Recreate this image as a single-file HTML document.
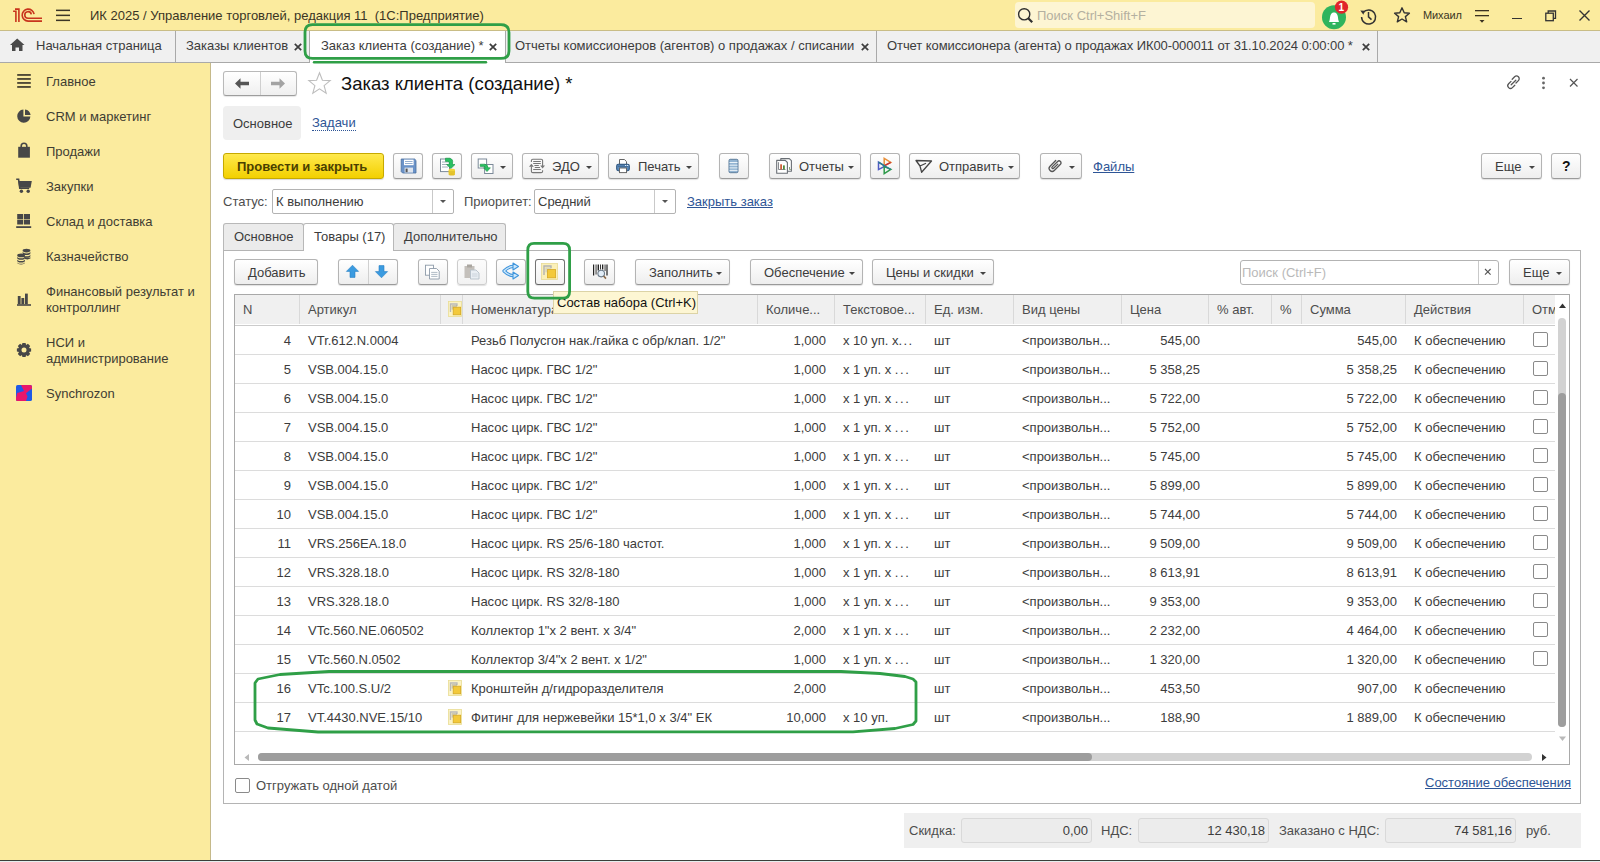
<!DOCTYPE html>
<html><head><meta charset="utf-8">
<style>
*{box-sizing:border-box;margin:0;padding:0}
html,body{width:1600px;height:862px;overflow:hidden;background:#fff;font-family:"Liberation Sans",sans-serif;font-size:13px;color:#3c3c3c}
.a{position:absolute}
.t{position:absolute;white-space:nowrap;line-height:15px;font-size:13px}
#top{left:0;top:0;width:1600px;height:31px;background:#fbeb9e;border-bottom:1px solid #c9bd86}
#tabs{left:0;top:31px;width:1600px;height:32px;background:#f0f0f0;border-bottom:1px solid #a9a9a9}
.tsep{position:absolute;top:31px;width:1px;height:31px;background:#a9a9a9}
#side{left:0;top:63px;width:211px;height:797px;background:#fbeb9e;border-right:1px solid #c5b98a}
#bot{left:0;top:860px;width:1600px;height:1px;background:#3b3f3a}
#bot2{left:0;top:861px;width:1600px;height:1px;background:#e6eeee}
.side .t{color:#3f3d33}
.btn{position:absolute;height:26px;border:1px solid #b4b4b4;border-bottom-color:#9a9a9a;border-radius:3px;background:linear-gradient(#ffffff,#eeeeee);box-shadow:0 1px 1px rgba(0,0,0,.12)}
.dd{position:absolute;width:0;height:0;border-left:3px solid transparent;border-right:3px solid transparent;border-top:3px solid #444}
.lnk{color:#2e5596;text-decoration:underline}
.hd{position:absolute;top:295px;height:29px;background:#f0f0f0;border-right:1px solid #d9d9d9}
.rs{position:absolute;left:235px;width:1320px;height:1px;background:#dcdcdc}
.num{text-align:right}
.cb{position:absolute;width:15px;height:15px;border:1px solid #8a8a8a;border-radius:2px;background:#fff}
</style></head><body>
<!-- TOP BAR -->
<div id="top" class="a"></div>
<div id="tabs" class="a"></div>
<div id="side" class="a side"></div>

<!-- top bar content -->
<svg class="a" style="left:0;top:0" width="50" height="30" viewBox="0 0 50 30">
<g fill="none" stroke="#c8341d" stroke-width="1.6" stroke-linecap="butt">
<polyline points="13.1,11.3 15.9,11.3 15.9,21.9"/>
<polyline points="15,9.1 18.9,9.1 18.9,21.9"/>
<path d="M34.1,14.1 A6,6 0 1 0 28.1,21.1 L42,21.1"/>
<path d="M31.3,14.3 A3.3,3.3 0 1 0 28.1,18.3 L42,18.3"/>
</g></svg>
<svg class="a" style="left:55px;top:8px" width="16" height="14"><g fill="#3b3526"><rect x="1" y="1.6" width="14" height="1.5"/><rect x="1" y="6.6" width="14" height="1.5"/><rect x="1" y="11.6" width="14" height="1.5"/></g></svg>
<div class="t" style="left:90px;top:8px;color:#3a3524">ИК 2025 / Управление торговлей, редакция 11&nbsp; (1С:Предприятие)</div>
<div class="a" style="left:1015px;top:2px;width:300px;height:26px;background:#fdf5d3;border-radius:4px"></div>
<svg class="a" style="left:1017px;top:7px" width="18" height="18"><circle cx="7.2" cy="7.3" r="5.6" fill="none" stroke="#2f2f2f" stroke-width="1.4"/><line x1="11.2" y1="11.3" x2="15.2" y2="15.3" stroke="#2f2f2f" stroke-width="2.2"/></svg>
<div class="t" style="left:1037px;top:8px;color:#b4b0a0">Поиск Ctrl+Shift+F</div>
<svg class="a" style="left:1318px;top:0" width="36" height="30"><circle cx="16" cy="17.3" r="12" fill="#2fb45d"/><path d="M11,22 L11.5,20.5 C12,19 11.8,16 13,14.2 C14,12.8 15,12.5 16,12.5 C17,12.5 18,12.8 19,14.2 C20.2,16 20,19 20.5,20.5 L21,22 Z" fill="#fff"/><rect x="14.5" y="23" width="3" height="1.6" fill="#fff"/><circle cx="23.5" cy="7.2" r="6.6" fill="#e0252b"/><text x="23.4" y="11" font-family="Liberation Sans" font-size="10" font-weight="bold" fill="#fff" text-anchor="middle">1</text></svg>
<svg class="a" style="left:1358px;top:6px" width="20" height="20"><path d="M5.2,6.6 A7,7 0 1 1 3.6,11" fill="none" stroke="#333" stroke-width="1.5"/><path d="M2.3,4.4 L6.8,4.8 L5.4,8.8 Z" fill="#333"/><path d="M10.5,6 L10.5,10.8 L13.5,13.6" fill="none" stroke="#333" stroke-width="1.5"/></svg>
<svg class="a" style="left:1393px;top:6px" width="18" height="18"><path d="M9,1.8 L11.2,6.8 L16.4,7.2 L12.4,10.6 L13.7,15.8 L9,13 L4.3,15.8 L5.6,10.6 L1.6,7.2 L6.8,6.8 Z" fill="none" stroke="#333" stroke-width="1.4" stroke-linejoin="round"/></svg>
<div class="t" style="left:1423px;top:8px;font-size:11px;color:#3a3524;letter-spacing:-0.1px">Михаил</div>
<svg class="a" style="left:1474px;top:8px" width="16" height="16"><rect x="1" y="2" width="14" height="1.3" fill="#3a3020"/><rect x="1" y="7" width="14" height="1.3" fill="#3a3020"/><path d="M5.5,12 L10.5,12 L8,14.8 Z" fill="#3a3020"/></svg>
<div class="a" style="left:1512px;top:18px;width:10px;height:1.3px;background:#333"></div>
<svg class="a" style="left:1544px;top:9px" width="14" height="14"><rect x="1.8" y="4.2" width="7.5" height="7.5" fill="none" stroke="#333" stroke-width="1.3"/><path d="M4.2,4.2 V2 H11.5 V9.3 H9.3" fill="none" stroke="#333" stroke-width="1.3"/></svg>
<svg class="a" style="left:1578px;top:9px" width="14" height="14"><path d="M1.5,1.5 L11.5,11.5 M11.5,1.5 L1.5,11.5" stroke="#333" stroke-width="1.4"/></svg>
<!-- tabs -->
<svg class="a" style="left:10px;top:38px" width="16" height="14"><path d="M7.2,0.5 L14.5,7 L12.5,7 L12.5,13 L9,13 L9,9.5 L5.5,9.5 L5.5,13 L2,13 L2,7 L0,7 Z" fill="#4a4a4a"/></svg>
<div class="t" style="left:36px;top:38px;color:#3c3c3c">Начальная страница</div>
<div class="tsep" style="left:175px"></div>
<div class="t" style="left:186px;top:38px;color:#3c3c3c">Заказы клиентов</div>
<svg class="a" style="left:294px;top:43px" width="8" height="8"><path d="M0.8,0.8 L7.2,7.2 M7.2,0.8 L0.8,7.2" stroke="#3d3d3d" stroke-width="1.7"/></svg>
<div class="tsep" style="left:309px"></div>
<div class="a" style="left:310px;top:31px;width:195px;height:32px;background:#fff"></div>
<div class="t" style="left:321px;top:38px;color:#3c3c3c">Заказ клиента (создание) *</div>
<svg class="a" style="left:489px;top:43px" width="8" height="8"><path d="M0.8,0.8 L7.2,7.2 M7.2,0.8 L0.8,7.2" stroke="#3d3d3d" stroke-width="1.7"/></svg>
<div class="tsep" style="left:505px"></div>
<div class="t" style="left:515px;top:38px;color:#3c3c3c">Отчеты комиссионеров (агентов) о продажах / списании</div>
<svg class="a" style="left:861px;top:43px" width="8" height="8"><path d="M0.8,0.8 L7.2,7.2 M7.2,0.8 L0.8,7.2" stroke="#3d3d3d" stroke-width="1.7"/></svg>
<div class="tsep" style="left:876px"></div>
<div class="t" style="left:887px;top:38px;color:#3c3c3c;letter-spacing:-0.08px">Отчет комиссионера (агента) о продажах ИК00-000011 от 31.10.2024 0:00:00 *</div>
<svg class="a" style="left:1362px;top:43px" width="8" height="8"><path d="M0.8,0.8 L7.2,7.2 M7.2,0.8 L0.8,7.2" stroke="#3d3d3d" stroke-width="1.7"/></svg>
<div class="tsep" style="left:1377px"></div>

<!-- sidebar -->
<svg class="a" style="left:16px;top:73px" width="16" height="16"><g fill="#3f3a2c"><rect x="1.2" y="1.1" width="13.6" height="1.7"/><rect x="1.2" y="5.1" width="13.6" height="1.7"/><rect x="1.2" y="9.1" width="13.6" height="1.7"/><rect x="1.2" y="13.1" width="13.6" height="1.7"/></g></svg>
<div class="t" style="left:46px;top:74px;color:#3f3d33">Главное</div>
<svg class="a" style="left:16px;top:108px" width="16" height="16"><path d="M7.4,1.6 A6.6,6.6 0 1 0 14.4,8.6 L7.4,8.6 Z" fill="#474747"/><path d="M9,1.4 A6.6,6.6 0 0 1 14.6,7 L9,7 Z" fill="#474747"/></svg>
<div class="t" style="left:46px;top:109px;color:#3f3d33">CRM и маркетинг</div>
<svg class="a" style="left:16px;top:141px" width="16" height="18"><path d="M20.5,0" /><path d="M2.2,5.8 H13.9 V16.7 H2.2 Z" fill="#474747"/><path d="M5.2,7.5 V5 A2.8,2.8 0 0 1 10.8,5 V7.5" fill="none" stroke="#474747" stroke-width="1.6"/></svg>
<div class="t" style="left:46px;top:144px;color:#3f3d33">Продажи</div>
<svg class="a" style="left:15px;top:177px" width="18" height="16"><path d="M1.2,2.3 H3.6 L4.8,11.2 H14.2" fill="none" stroke="#474747" stroke-width="1.6"/><path d="M3.3,3.9 H16.8 L15.6,10.7 H4.2 Z" fill="#474747"/><circle cx="6.4" cy="14.3" r="1.7" fill="#474747"/><circle cx="13.2" cy="14.3" r="1.7" fill="#474747"/></svg>
<div class="t" style="left:46px;top:179px;color:#3f3d33">Закупки</div>
<svg class="a" style="left:16px;top:213px" width="16" height="16"><g fill="#474747"><rect x="1.2" y="1" width="6" height="5"/><rect x="8" y="1" width="6" height="5"/><rect x="1.2" y="6.6" width="6" height="4.9"/><rect x="8" y="6.6" width="6" height="4.9"/><rect x="0.2" y="13.2" width="15" height="1.8"/></g></svg>
<div class="t" style="left:46px;top:214px;color:#3f3d33">Склад и доставка</div>
<svg class="a" style="left:16px;top:247px" width="16" height="18"><g fill="#474747"><ellipse cx="10.5" cy="3.6" rx="3.9" ry="1.8"/><path d="M6.6,4.6 A3.9,1.8 0 0 0 14.4,4.6 V6.2 A3.9,1.8 0 0 1 6.6,6.2 Z"/><path d="M6.6,7.4 A3.9,1.8 0 0 0 14.4,7.4 V9 A3.9,1.8 0 0 1 6.6,9 Z"/><path d="M9,10.2 A3.9,1.8 0 0 0 14.4,10.2 V11.6 A3.9,1.8 0 0 1 9,12 Z"/><ellipse cx="5.1" cy="8.4" rx="3.9" ry="1.8"/><path d="M1.2,9.4 A3.9,1.8 0 0 0 9,9.4 V11 A3.9,1.8 0 0 1 1.2,11 Z"/><path d="M1.2,12.2 A3.9,1.8 0 0 0 9,12.2 V13.8 A3.9,1.8 0 0 1 1.2,13.8 Z"/><path d="M1.2,15 A3.9,1.8 0 0 0 9,15 V15.6 A3.9,1.8 0 0 1 1.2,15.6 Z"/></g></svg>
<div class="t" style="left:46px;top:249px;color:#3f3d33">Казначейство</div>
<svg class="a" style="left:16px;top:292px" width="16" height="15"><g fill="#474747"><rect x="1.8" y="4" width="2.8" height="8.2"/><rect x="5.4" y="6" width="2.8" height="6.2"/><rect x="9" y="1.6" width="2.8" height="10.6"/><rect x="1" y="12.2" width="14" height="1.6"/></g></svg>
<div class="t" style="left:46px;top:284px;color:#3f3d33">Финансовый результат и</div>
<div class="t" style="left:46px;top:300px;color:#3f3d33">контроллинг</div>
<svg class="a" style="left:16px;top:342px" width="16" height="16"><path fill="#474747" fill-rule="evenodd" d="M12.97,5.90 L15.12,6.41 L15.12,9.59 L12.97,10.10 L13.00,10.03 L14.16,11.91 L11.91,14.16 L10.03,13.00 L10.10,12.97 L9.59,15.12 L6.41,15.12 L5.90,12.97 L5.97,13.00 L4.09,14.16 L1.84,11.91 L3.00,10.03 L3.03,10.10 L0.88,9.59 L0.88,6.41 L3.03,5.90 L3.00,5.97 L1.84,4.09 L4.09,1.84 L5.97,3.00 L5.90,3.03 L6.41,0.88 L9.59,0.88 L10.10,3.03 L10.03,3.00 L11.91,1.84 L14.16,4.09 L13.00,5.97 Z M10.5,8 A2.5,2.5 0 1 0 5.5,8 A2.5,2.5 0 1 0 10.5,8 Z"/></svg>
<div class="t" style="left:46px;top:335px;color:#3f3d33">НСИ и</div>
<div class="t" style="left:46px;top:351px;color:#3f3d33">администрирование</div>
<svg class="a" style="left:16px;top:385px" width="16" height="16"><defs><clipPath id="sq"><rect x="0" y="0" width="16" height="16" rx="1.6"/></clipPath></defs><g clip-path="url(#sq)"><rect x="0" y="0" width="16" height="16" fill="#1f5ae6"/><path d="M5,0 L16,0 L16,3.6 L10,8.2 L11.5,11.5 L10,16 L0,16 L0,13 L1.2,8 L8,6 Z" fill="#e8176a"/></g></svg>
<div class="t" style="left:46px;top:386px;color:#3f3d33">Synchrozon</div>

<!-- form header -->
<div class="a" style="left:223px;top:71px;width:74px;height:25px;border:1px solid #b9b9b9;border-bottom-color:#9d9d9d;border-radius:3px;background:linear-gradient(#fff,#efefef);box-shadow:0 1px 1px rgba(0,0,0,.1)"></div>
<div class="a" style="left:260px;top:72px;width:1px;height:23px;background:#cfcfcf"></div>
<svg class="a" style="left:234px;top:77px" width="16" height="13"><path d="M1,6.5 L6.5,1.2 L6.5,4.8 L15,4.8 L15,8.2 L6.5,8.2 L6.5,11.8 Z" fill="#555"/></svg>
<svg class="a" style="left:270px;top:77px" width="16" height="13"><path d="M15,6.5 L9.5,1.2 L9.5,4.8 L1,4.8 L1,8.2 L9.5,8.2 L9.5,11.8 Z" fill="#a3a3a3"/></svg>
<svg class="a" style="left:307px;top:71px" width="25" height="24"><path d="M12.5,1.8 L15.4,9.2 L23.2,9.6 L17.1,14.6 L19.2,22.2 L12.5,17.9 L5.8,22.2 L7.9,14.6 L1.8,9.6 L9.6,9.2 Z" fill="none" stroke="#bdbdbd" stroke-width="1.1" stroke-linejoin="miter"/></svg>
<div class="t" style="left:341px;top:73px;font-size:18.5px;line-height:21px;color:#111">Заказ клиента (создание) *</div>
<svg class="a" style="left:1505px;top:74px" width="17" height="17"><g fill="none" stroke="#555" stroke-width="1.3" stroke-linecap="round"><path d="M7.2,5.2 L9.6,2.8 A2.6,2.6 0 0 1 13.4,6.6 L11,9"/><path d="M9.8,11.2 L7.4,13.6 A2.6,2.6 0 0 1 3.6,9.8 L6,7.4"/><path d="M6.2,10.8 L10.8,6.2"/></g></svg>
<svg class="a" style="left:1540px;top:76px" width="8" height="14"><g fill="#666"><circle cx="3.5" cy="2.2" r="1.4"/><circle cx="3.5" cy="7" r="1.4"/><circle cx="3.5" cy="11.8" r="1.4"/></g></svg>
<svg class="a" style="left:1569px;top:78px" width="10" height="10"><path d="M1,1 L8.5,8.5 M8.5,1 L1,8.5" stroke="#555" stroke-width="1.2"/></svg>
<div class="a" style="left:223px;top:106px;width:78px;height:34px;background:#efefef;border-radius:4px"></div>
<div class="t" style="left:233px;top:116px;color:#3c3c3c">Основное</div>
<div class="t" style="left:312px;top:116px;color:#2e5596;border-bottom:1px dotted #2e5596;line-height:14px">Задачи</div>
<!-- command bar -->
<div class="a" style="left:223px;top:153px;width:161px;height:26px;border:1px solid #c6a900;border-radius:3px;background:linear-gradient(#ffe94d,#f3d000);box-shadow:0 1px 1px rgba(0,0,0,.15)"></div>
<div class="t" style="left:237px;top:159px;font-weight:bold;color:#4a4000">Провести и закрыть</div>
<div class="btn" style="left:393px;top:153px;width:30px"></div>
<div class="btn" style="left:432px;top:153px;width:30px"></div>
<div class="btn" style="left:471px;top:153px;width:42px"></div>
<div class="btn" style="left:522px;top:153px;width:77px"></div>
<div class="btn" style="left:608px;top:153px;width:91px"></div>
<div class="btn" style="left:719px;top:153px;width:30px"></div>
<div class="btn" style="left:769px;top:153px;width:92px"></div>
<div class="btn" style="left:870px;top:153px;width:30px"></div>
<div class="btn" style="left:909px;top:153px;width:111px"></div>
<div class="btn" style="left:1040px;top:153px;width:42px"></div>
<div class="btn" style="left:1481px;top:153px;width:61px"></div>
<div class="btn" style="left:1551px;top:153px;width:30px"></div>
<!-- icons command bar -->
<svg class="a" style="left:400px;top:158px" width="17" height="16"><path d="M1.2,1 H14.6 L16,2.4 V15 H2.6 L1.2,13.6 Z" fill="#6b93c9" stroke="#4a6f9f" stroke-width="0.8"/><rect x="4" y="1.6" width="9.6" height="5.6" fill="#fff"/><rect x="5" y="3" width="7.6" height="0.9" fill="#8aa6cc"/><rect x="5" y="5" width="7.6" height="0.9" fill="#8aa6cc"/><rect x="4.6" y="9.6" width="8.4" height="5" fill="#dde4ee"/><rect x="5.6" y="10.6" width="2" height="3.6" fill="#555"/></svg>
<svg class="a" style="left:439px;top:157px" width="18" height="19"><rect x="1.5" y="2" width="9" height="12.6" fill="#fff" stroke="#7c8a99" stroke-width="1"/><g stroke="#9aa7b4" stroke-width="0.9"><line x1="3" y1="5" x2="9" y2="5"/><line x1="3" y1="7.5" x2="9" y2="7.5"/><line x1="3" y1="10" x2="9" y2="10"/></g><path d="M6.5,1.2 H11 A4,4 0 0 1 13.5,6 V7.5 H16 L11.8,11.6 L7.6,7.5 H10.2 V6 A1.5,1.5 0 0 0 8.7,4.4 H6.5 Z" fill="#28c062" stroke="#119040" stroke-width="0.6"/><ellipse cx="12.8" cy="13" rx="3.2" ry="1.3" fill="#f2d53b"/><rect x="9.6" y="13" width="6.4" height="4.2" fill="#f2d53b"/><ellipse cx="12.8" cy="17.2" rx="3.2" ry="1.3" fill="#e3c02a"/><line x1="9.6" y1="15" x2="16" y2="15" stroke="#c9a81c" stroke-width="0.7"/></svg>
<svg class="a" style="left:477px;top:158px" width="18" height="17"><rect x="1.2" y="1" width="8.4" height="9" fill="#fff" stroke="#7c8a99"/><rect x="7.6" y="6.5" width="8.4" height="9" fill="#fff" stroke="#7c8a99"/><path d="M3.2,6.2 H7.5 A3.6,3.6 0 0 1 11,9.8 H13.4 L10,13.6 L6.6,9.8 H8.6 A1.6,1.6 0 0 0 7,8.4 H3.2 Z" fill="#2cc162" stroke="#129142" stroke-width="0.6"/></svg>
<div class="dd" style="left:500px;top:166px"></div>
<svg class="a" style="left:524px;top:153px" width="28" height="26"><g fill="none" stroke="#777" stroke-width="1.1"><path d="M7.4,9 V7.6 A1.4,1.4 0 0 1 8.8,6.2 H17.2 A1.4,1.4 0 0 1 18.6,7.6 V13"/><path d="M18.6,17.2 V18.2 A1.4,1.4 0 0 1 17.2,19.6 H8.8 A1.4,1.4 0 0 1 7.4,18.2 V13.5"/><path d="M9.2,8.5 H16.8 M9.2,10.5 H16.8 M10.4,12.5 H14.8 M10.8,14.5 H16 M9.2,16.5 H16.8"/></g><path d="M5,13.8 L9.8,13.8 L7.4,10.8 Z M16.2,12.4 L21,12.4 L18.6,15.4 Z" fill="#777"/></svg>
<div class="t" style="left:552px;top:159px;color:#3c3c3c">ЭДО</div>
<div class="dd" style="left:586px;top:166px"></div>
<svg class="a" style="left:610px;top:153px" width="28" height="26"><path d="M9.5,6.5 H14.4 L16.5,8.6 V11.5 H9.5 Z" fill="#fff" stroke="#666" stroke-width="1"/><rect x="6.7" y="11.3" width="12.6" height="6.4" rx="1.6" fill="#5d8cbd" stroke="#2e5680" stroke-width="1.1"/><line x1="8" y1="13.2" x2="18" y2="13.2" stroke="#2e5680" stroke-width="0.8"/><rect x="15" y="12" width="1.2" height="1" fill="#dff0ff"/><rect x="17" y="12" width="1.2" height="1" fill="#dff0ff"/><rect x="9.5" y="15" width="7" height="4.6" fill="#fff" stroke="#666" stroke-width="1"/></svg>
<div class="t" style="left:638px;top:159px;color:#3c3c3c">Печать</div>
<div class="dd" style="left:686px;top:166px"></div>
<svg class="a" style="left:727px;top:158px" width="13" height="16"><rect x="2" y="1.3" width="9" height="13.4" rx="1.2" fill="#93b4d2" stroke="#5f7f9d" stroke-width="1"/><g stroke="#eaf2f8" stroke-width="1"><line x1="2.5" y1="4.5" x2="10.5" y2="4.5"/><line x1="2.5" y1="7.2" x2="10.5" y2="7.2"/><line x1="2.5" y1="9.9" x2="10.5" y2="9.9"/><line x1="2.5" y1="12.4" x2="10.5" y2="12.4"/></g></svg>
<svg class="a" style="left:770px;top:153px" width="28" height="26"><path d="M10.8,5.6 H19.3 L21.4,7.7 V18.3 H10.8 Z" fill="#fff" stroke="#6a6f75" stroke-width="1.1" stroke-linejoin="round"/><path d="M6.7,7.4 H15.3 L17.4,9.5 V20.2 H6.7 Z" fill="#fff" stroke="#6a6f75" stroke-width="1.1" stroke-linejoin="round"/><path d="M8.5,9.2 V16.5 H15.5" fill="none" stroke="#6a6f75" stroke-width="0.8"/><rect x="10.2" y="11.3" width="1.8" height="5.2" fill="#d0603a"/><rect x="13" y="12.4" width="1.8" height="4.1" fill="#4f8a3e"/><path d="M19.5,14 V16.5 H20.8" fill="none" stroke="#6a8a5a" stroke-width="0.8"/></svg>
<div class="t" style="left:799px;top:159px;color:#3c3c3c">Отчеты</div>
<div class="dd" style="left:848px;top:166px"></div>
<svg class="a" style="left:870px;top:153px" width="30" height="26"><g fill="none" stroke-width="1.5" stroke-linejoin="miter"><path d="M14.2,5.3 L20.8,9.4 L14.2,12.7 Z" stroke="#e8903a"/><path d="M20.8,9.4 L14.6,12.6" stroke="#c8323a"/><path d="M8.5,9.2 L14.9,13.1 L8.5,16.6 Z" stroke="#4f5bc4"/><path d="M14.2,13.6 L20.8,16.4 L14.2,20.6 Z" stroke="#2f9a4a"/><path d="M8.5,9.2 L14.9,13.1 L20.8,16.4" stroke="#2b7f8f"/></g></svg>
<svg class="a" style="left:913px;top:157px" width="21" height="18"><path d="M3,3.5 L18.5,4 L8.6,15.2 L7,9 Z M7,9 L12.5,6.5" fill="none" stroke="#444" stroke-width="1.3" stroke-linejoin="round" stroke-linecap="round"/></svg>
<div class="t" style="left:939px;top:159px;color:#3c3c3c">Отправить</div>
<div class="dd" style="left:1008px;top:166px"></div>
<svg class="a" style="left:1047px;top:157px" width="16" height="17"><g transform="rotate(45 8 8.5)"><path d="M5,4.5 V12.5 A3,3 0 0 0 11,12.5 V3.8 A2,2 0 0 0 7,3.8 V11.5 A1,1 0 0 0 9,11.5 V5.5" fill="none" stroke="#555" stroke-width="1.3" stroke-linecap="round"/></g></svg>
<div class="dd" style="left:1069px;top:166px"></div>
<div class="t" style="left:1093px;top:159px;color:#2e5596;text-decoration:underline">Файлы</div>
<div class="t" style="left:1495px;top:159px;color:#3c3c3c">Еще</div>
<div class="dd" style="left:1529px;top:166px"></div>
<div class="t" style="left:1562px;top:159px;color:#111;font-weight:bold;font-size:14px">?</div>
<!-- status row -->
<div class="t" style="left:223px;top:194px;color:#4d4d4d">Статус:</div>
<div class="a" style="left:272px;top:189px;width:182px;height:25px;border:1px solid #b3b3b3;border-radius:2px;background:#fff"></div>
<div class="a" style="left:432px;top:190px;width:1px;height:23px;background:#c9c9c9"></div>
<div class="dd" style="left:440px;top:200px;border-top-color:#555"></div>
<div class="t" style="left:276px;top:194px;color:#3c3c3c">К выполнению</div>
<div class="t" style="left:464px;top:194px;color:#4d4d4d">Приоритет:</div>
<div class="a" style="left:534px;top:189px;width:142px;height:25px;border:1px solid #b3b3b3;border-radius:2px;background:#fff"></div>
<div class="a" style="left:654px;top:190px;width:1px;height:23px;background:#c9c9c9"></div>
<div class="dd" style="left:662px;top:200px;border-top-color:#555"></div>
<div class="t" style="left:538px;top:194px;color:#3c3c3c">Средний</div>
<div class="t" style="left:687px;top:194px;color:#2e5596;text-decoration:underline">Закрыть заказ</div>
<!-- tabs -->
<div class="a" style="left:223px;top:223px;width:81px;height:28px;background:#ebebeb;border:1px solid #b8b8b8;border-bottom:none;border-radius:3px 3px 0 0"></div>
<div class="a" style="left:303px;top:223px;width:91px;height:28px;background:#fff;border:1px solid #b8b8b8;border-bottom:none;border-radius:3px 3px 0 0"></div>
<div class="a" style="left:393px;top:223px;width:113px;height:28px;background:#ebebeb;border:1px solid #b8b8b8;border-bottom:none;border-radius:3px 3px 0 0"></div>
<div class="a" style="left:223px;top:250px;width:1358px;height:554px;border:1px solid #b4b4b4;border-top:none"></div>
<div class="a" style="left:223px;top:250px;width:81px;height:1px;background:#b4b4b4"></div>
<div class="a" style="left:393px;top:250px;width:1188px;height:1px;background:#b4b4b4"></div>
<div class="t" style="left:234px;top:229px;color:#3c3c3c">Основное</div>
<div class="t" style="left:314px;top:229px;color:#3c3c3c">Товары (17)</div>
<div class="t" style="left:404px;top:229px;color:#3c3c3c">Дополнительно</div>
<!-- inner toolbar -->
<div class="btn" style="left:234px;top:259px;width:84px"></div>
<div class="t" style="left:248px;top:265px;color:#3c3c3c">Добавить</div>
<div class="btn" style="left:338px;top:259px;width:60px"></div>
<div class="a" style="left:368px;top:260px;width:1px;height:24px;background:#d0d0d0"></div>
<svg class="a" style="left:345px;top:264px" width="15" height="15"><path d="M7.5,1.2 L13.6,7.4 H10 V13.4 H5 V7.4 H1.4 Z" fill="#3b9be0" stroke="#2a80c2" stroke-width="0.6"/></svg>
<svg class="a" style="left:374px;top:264px" width="15" height="15"><path d="M7.5,13.8 L13.6,7.6 H10 V1.6 H5 V7.6 H1.4 Z" fill="#3b9be0" stroke="#2a80c2" stroke-width="0.6"/></svg>
<div class="btn" style="left:418px;top:259px;width:30px"></div>
<svg class="a" style="left:424px;top:264px" width="17" height="16"><rect x="1.5" y="1.2" width="8" height="10" fill="#fff" stroke="#8d9aa8" stroke-width="0.9"/><path d="M5.5,4.5 H12.5 L15.2,7.2 V15 H5.5 Z" fill="#fff" stroke="#8d9aa8" stroke-width="0.9"/><g stroke="#a7b3bf" stroke-width="0.9"><line x1="7.2" y1="8.4" x2="13.5" y2="8.4"/><line x1="7.2" y1="10.4" x2="13.5" y2="10.4"/><line x1="7.2" y1="12.4" x2="13.5" y2="12.4"/></g></svg>
<div class="btn" style="left:457px;top:259px;width:30px;background:linear-gradient(#fcfcfc,#f2f2f2);border-color:#cdcdcd"></div>
<svg class="a" style="left:463px;top:263px" width="18" height="17"><rect x="1.5" y="3" width="10" height="12" fill="#c4c0bb"/><rect x="4" y="1.5" width="5" height="3" fill="#aaa6a0"/><path d="M7.5,7 H13 L16,10 V16 H7.5 Z" fill="#e9eef3" stroke="#b6c0ca" stroke-width="0.9"/><g stroke="#c3ccd5" stroke-width="0.8"><line x1="9" y1="11" x2="14.5" y2="11"/><line x1="9" y1="13" x2="14.5" y2="13"/></g></svg>
<div class="btn" style="left:496px;top:259px;width:30px"></div>
<svg class="a" style="left:500px;top:261px" width="22" height="22"><g fill="none" stroke-linecap="round"><path d="M4,10 Q9,5 14.5,5.5 M4,10 Q9,15 14.5,14.5" stroke="#3f95dc" stroke-width="3.2"/><path d="M4,10 Q9,5 14.5,5.5 M4,10 Q9,15 14.5,14.5" stroke="#cde7fb" stroke-width="1.2"/></g><path d="M13,2 L18.5,5.5 L13,9 Z M13,11 L18.5,14.5 L13,18 Z" fill="#cde7fb" stroke="#3f95dc" stroke-width="1.1" stroke-linejoin="round"/></svg>
<div class="btn" style="left:535px;top:259px;width:30px;border-color:#747474;border-bottom-color:#666;background:linear-gradient(#ffffff,#f1f1f1)"></div>
<svg class="a" style="left:541px;top:263px" width="17" height="17"><rect x="0.5" y="0.5" width="16" height="16" fill="#fbf0b8" stroke="#e8da95" stroke-width="0.8"/><path d="M3,12 V3 H10 V5" fill="none" stroke="#b3b3b3" stroke-width="1.4"/><rect x="4.3" y="4.3" width="6" height="5" fill="#bdbdbd" opacity="0.5"/><rect x="6.4" y="6.6" width="8.2" height="8.2" fill="#f3c93a" stroke="#d7a923" stroke-width="0.8"/></svg>
<div class="btn" style="left:584px;top:259px;width:31px"></div>
<svg class="a" style="left:591px;top:263px" width="18" height="18"><g fill="#222"><rect x="2" y="1.5" width="1.2" height="11"/><rect x="4.6" y="1.5" width="0.9" height="10"/><rect x="6.6" y="1.5" width="1.4" height="6"/><rect x="9" y="1.5" width="0.9" height="5"/><rect x="11" y="1.5" width="1.3" height="5"/><rect x="13.6" y="1.5" width="0.9" height="6.5"/><rect x="15.4" y="1.5" width="1.2" height="11"/></g><circle cx="10.2" cy="10.6" r="3.3" fill="#e3eef8" stroke="#6b7a88" stroke-width="1.1"/><line x1="12.6" y1="13" x2="15" y2="15.6" stroke="#8b6a4a" stroke-width="1.6"/></svg>
<div class="btn" style="left:635px;top:259px;width:95px"></div>
<div class="t" style="left:649px;top:265px;color:#3c3c3c">Заполнить</div>
<div class="dd" style="left:716px;top:272px"></div>
<div class="btn" style="left:750px;top:259px;width:113px"></div>
<div class="t" style="left:764px;top:265px;color:#3c3c3c">Обеспечение</div>
<div class="dd" style="left:849px;top:272px"></div>
<div class="btn" style="left:872px;top:259px;width:122px"></div>
<div class="t" style="left:886px;top:265px;color:#3c3c3c">Цены и скидки</div>
<div class="dd" style="left:980px;top:272px"></div>
<div class="a" style="left:1240px;top:260px;width:259px;height:25px;border:1px solid #b3b3b3;border-radius:3px;background:#fff"></div>
<div class="a" style="left:1478px;top:261px;width:1px;height:23px;background:#c9c9c9"></div>
<div class="t" style="left:1242px;top:265px;color:#b9b9b9">Поиск (Ctrl+F)</div>
<svg class="a" style="left:1484px;top:268px" width="8" height="8"><path d="M1,1 L6.6,6.6 M6.6,1 L1,6.6" stroke="#555" stroke-width="1.1"/></svg>
<div class="btn" style="left:1509px;top:259px;width:61px"></div>
<div class="t" style="left:1523px;top:265px;color:#3c3c3c">Еще</div>
<div class="dd" style="left:1556px;top:272px"></div>
<!-- table -->
<div class="a" style="left:234px;top:294px;width:1336px;height:471px;border:1px solid #a9a9a9;background:#fff"></div>
<div class="hd" style="left:235px;width:65px"></div>
<div class="hd" style="left:300px;width:141px"></div>
<div class="hd" style="left:441px;width:22px"></div>
<div class="hd" style="left:463px;width:295px"></div>
<div class="hd" style="left:758px;width:77px"></div>
<div class="hd" style="left:835px;width:91px"></div>
<div class="hd" style="left:926px;width:88px"></div>
<div class="hd" style="left:1014px;width:108px"></div>
<div class="hd" style="left:1122px;width:87px"></div>
<div class="hd" style="left:1209px;width:63px"></div>
<div class="hd" style="left:1272px;width:30px"></div>
<div class="hd" style="left:1302px;width:104px"></div>
<div class="hd" style="left:1406px;width:118px"></div>
<div class="hd" style="left:1524px;width:31px;border-right:none;overflow:hidden"><div class="t" style="left:8px;top:7px;color:#4d4d4d">Отм</div></div>
<div class="a" style="left:235px;top:325px;width:1320px;height:1px;background:#cbcbcb"></div>
<div class="t" style="left:243px;top:302px;color:#4d4d4d">N</div>
<div class="t" style="left:308px;top:302px;color:#4d4d4d">Артикул</div>
<svg class="a" style="left:448px;top:301px" width="14" height="16"><rect x="0.5" y="0.5" width="13" height="15" fill="#fbf3c4" stroke="#e9dc95" stroke-width="0.8"/><path d="M2.5,11 V3 H9 V5" fill="none" stroke="#b9b9b9" stroke-width="1.3"/><rect x="3.6" y="4" width="5.4" height="4.6" fill="#9b9b9b" opacity="0.5"/><rect x="5.2" y="6.2" width="7.4" height="7.6" fill="#f3c93a" stroke="#d6a922" stroke-width="0.8"/></svg>
<div class="t" style="left:471px;top:302px;color:#4d4d4d">Номенклатура</div>
<div class="t" style="left:766px;top:302px;color:#4d4d4d">Количе...</div>
<div class="t" style="left:843px;top:302px;color:#4d4d4d">Текстовое...</div>
<div class="t" style="left:934px;top:302px;color:#4d4d4d">Ед. изм.</div>
<div class="t" style="left:1022px;top:302px;color:#4d4d4d">Вид цены</div>
<div class="t" style="left:1130px;top:302px;color:#4d4d4d">Цена</div>
<div class="t" style="left:1217px;top:302px;color:#4d4d4d">% авт.</div>
<div class="t" style="left:1280px;top:302px;color:#4d4d4d">%</div>
<div class="t" style="left:1310px;top:302px;color:#4d4d4d">Сумма</div>
<div class="t" style="left:1414px;top:302px;color:#4d4d4d">Действия</div>
<div class="rs" style="top:354px"></div>
<div class="t num" style="left:240px;width:51px;top:333px">4</div>
<div class="t" style="left:308px;top:333px">VTr.612.N.0004</div>
<div class="t" style="left:471px;top:333px">Резьб Полусгон нак./гайка с обр/клап. 1/2&quot;</div>
<div class="t num" style="left:760px;width:66px;top:333px">1,000</div>
<div class="t" style="left:843px;top:333px">x 10 уп. х<span style="letter-spacing:1.4px">...</span></div>
<div class="t" style="left:934px;top:333px">шт</div>
<div class="t" style="left:1022px;top:333px">&lt;произвольн...</div>
<div class="t num" style="left:1120px;width:80px;top:333px">545,00</div>
<div class="t num" style="left:1300px;width:97px;top:333px">545,00</div>
<div class="t" style="left:1414px;top:333px">К обеспечению</div>
<div class="cb" style="left:1533px;top:332px"></div>
<div class="rs" style="top:383px"></div>
<div class="t num" style="left:240px;width:51px;top:362px">5</div>
<div class="t" style="left:308px;top:362px">VSB.004.15.0</div>
<div class="t" style="left:471px;top:362px">Насос цирк. ГВС 1/2&quot;</div>
<div class="t num" style="left:760px;width:66px;top:362px">1,000</div>
<div class="t" style="left:843px;top:362px">x 1 уп. х <span style="letter-spacing:1.6px">...</span></div>
<div class="t" style="left:934px;top:362px">шт</div>
<div class="t" style="left:1022px;top:362px">&lt;произвольн...</div>
<div class="t num" style="left:1120px;width:80px;top:362px">5 358,25</div>
<div class="t num" style="left:1300px;width:97px;top:362px">5 358,25</div>
<div class="t" style="left:1414px;top:362px">К обеспечению</div>
<div class="cb" style="left:1533px;top:361px"></div>
<div class="rs" style="top:412px"></div>
<div class="t num" style="left:240px;width:51px;top:391px">6</div>
<div class="t" style="left:308px;top:391px">VSB.004.15.0</div>
<div class="t" style="left:471px;top:391px">Насос цирк. ГВС 1/2&quot;</div>
<div class="t num" style="left:760px;width:66px;top:391px">1,000</div>
<div class="t" style="left:843px;top:391px">x 1 уп. х <span style="letter-spacing:1.6px">...</span></div>
<div class="t" style="left:934px;top:391px">шт</div>
<div class="t" style="left:1022px;top:391px">&lt;произвольн...</div>
<div class="t num" style="left:1120px;width:80px;top:391px">5 722,00</div>
<div class="t num" style="left:1300px;width:97px;top:391px">5 722,00</div>
<div class="t" style="left:1414px;top:391px">К обеспечению</div>
<div class="cb" style="left:1533px;top:390px"></div>
<div class="rs" style="top:441px"></div>
<div class="t num" style="left:240px;width:51px;top:420px">7</div>
<div class="t" style="left:308px;top:420px">VSB.004.15.0</div>
<div class="t" style="left:471px;top:420px">Насос цирк. ГВС 1/2&quot;</div>
<div class="t num" style="left:760px;width:66px;top:420px">1,000</div>
<div class="t" style="left:843px;top:420px">x 1 уп. х <span style="letter-spacing:1.6px">...</span></div>
<div class="t" style="left:934px;top:420px">шт</div>
<div class="t" style="left:1022px;top:420px">&lt;произвольн...</div>
<div class="t num" style="left:1120px;width:80px;top:420px">5 752,00</div>
<div class="t num" style="left:1300px;width:97px;top:420px">5 752,00</div>
<div class="t" style="left:1414px;top:420px">К обеспечению</div>
<div class="cb" style="left:1533px;top:419px"></div>
<div class="rs" style="top:470px"></div>
<div class="t num" style="left:240px;width:51px;top:449px">8</div>
<div class="t" style="left:308px;top:449px">VSB.004.15.0</div>
<div class="t" style="left:471px;top:449px">Насос цирк. ГВС 1/2&quot;</div>
<div class="t num" style="left:760px;width:66px;top:449px">1,000</div>
<div class="t" style="left:843px;top:449px">x 1 уп. х <span style="letter-spacing:1.6px">...</span></div>
<div class="t" style="left:934px;top:449px">шт</div>
<div class="t" style="left:1022px;top:449px">&lt;произвольн...</div>
<div class="t num" style="left:1120px;width:80px;top:449px">5 745,00</div>
<div class="t num" style="left:1300px;width:97px;top:449px">5 745,00</div>
<div class="t" style="left:1414px;top:449px">К обеспечению</div>
<div class="cb" style="left:1533px;top:448px"></div>
<div class="rs" style="top:499px"></div>
<div class="t num" style="left:240px;width:51px;top:478px">9</div>
<div class="t" style="left:308px;top:478px">VSB.004.15.0</div>
<div class="t" style="left:471px;top:478px">Насос цирк. ГВС 1/2&quot;</div>
<div class="t num" style="left:760px;width:66px;top:478px">1,000</div>
<div class="t" style="left:843px;top:478px">x 1 уп. х <span style="letter-spacing:1.6px">...</span></div>
<div class="t" style="left:934px;top:478px">шт</div>
<div class="t" style="left:1022px;top:478px">&lt;произвольн...</div>
<div class="t num" style="left:1120px;width:80px;top:478px">5 899,00</div>
<div class="t num" style="left:1300px;width:97px;top:478px">5 899,00</div>
<div class="t" style="left:1414px;top:478px">К обеспечению</div>
<div class="cb" style="left:1533px;top:477px"></div>
<div class="rs" style="top:528px"></div>
<div class="t num" style="left:240px;width:51px;top:507px">10</div>
<div class="t" style="left:308px;top:507px">VSB.004.15.0</div>
<div class="t" style="left:471px;top:507px">Насос цирк. ГВС 1/2&quot;</div>
<div class="t num" style="left:760px;width:66px;top:507px">1,000</div>
<div class="t" style="left:843px;top:507px">x 1 уп. х <span style="letter-spacing:1.6px">...</span></div>
<div class="t" style="left:934px;top:507px">шт</div>
<div class="t" style="left:1022px;top:507px">&lt;произвольн...</div>
<div class="t num" style="left:1120px;width:80px;top:507px">5 744,00</div>
<div class="t num" style="left:1300px;width:97px;top:507px">5 744,00</div>
<div class="t" style="left:1414px;top:507px">К обеспечению</div>
<div class="cb" style="left:1533px;top:506px"></div>
<div class="rs" style="top:557px"></div>
<div class="t num" style="left:240px;width:51px;top:536px">11</div>
<div class="t" style="left:308px;top:536px">VRS.256EA.18.0</div>
<div class="t" style="left:471px;top:536px">Насос цирк. RS 25/6-180 частот.</div>
<div class="t num" style="left:760px;width:66px;top:536px">1,000</div>
<div class="t" style="left:843px;top:536px">x 1 уп. х <span style="letter-spacing:1.6px">...</span></div>
<div class="t" style="left:934px;top:536px">шт</div>
<div class="t" style="left:1022px;top:536px">&lt;произвольн...</div>
<div class="t num" style="left:1120px;width:80px;top:536px">9 509,00</div>
<div class="t num" style="left:1300px;width:97px;top:536px">9 509,00</div>
<div class="t" style="left:1414px;top:536px">К обеспечению</div>
<div class="cb" style="left:1533px;top:535px"></div>
<div class="rs" style="top:586px"></div>
<div class="t num" style="left:240px;width:51px;top:565px">12</div>
<div class="t" style="left:308px;top:565px">VRS.328.18.0</div>
<div class="t" style="left:471px;top:565px">Насос цирк. RS 32/8-180</div>
<div class="t num" style="left:760px;width:66px;top:565px">1,000</div>
<div class="t" style="left:843px;top:565px">x 1 уп. х <span style="letter-spacing:1.6px">...</span></div>
<div class="t" style="left:934px;top:565px">шт</div>
<div class="t" style="left:1022px;top:565px">&lt;произвольн...</div>
<div class="t num" style="left:1120px;width:80px;top:565px">8 613,91</div>
<div class="t num" style="left:1300px;width:97px;top:565px">8 613,91</div>
<div class="t" style="left:1414px;top:565px">К обеспечению</div>
<div class="cb" style="left:1533px;top:564px"></div>
<div class="rs" style="top:615px"></div>
<div class="t num" style="left:240px;width:51px;top:594px">13</div>
<div class="t" style="left:308px;top:594px">VRS.328.18.0</div>
<div class="t" style="left:471px;top:594px">Насос цирк. RS 32/8-180</div>
<div class="t num" style="left:760px;width:66px;top:594px">1,000</div>
<div class="t" style="left:843px;top:594px">x 1 уп. х <span style="letter-spacing:1.6px">...</span></div>
<div class="t" style="left:934px;top:594px">шт</div>
<div class="t" style="left:1022px;top:594px">&lt;произвольн...</div>
<div class="t num" style="left:1120px;width:80px;top:594px">9 353,00</div>
<div class="t num" style="left:1300px;width:97px;top:594px">9 353,00</div>
<div class="t" style="left:1414px;top:594px">К обеспечению</div>
<div class="cb" style="left:1533px;top:593px"></div>
<div class="rs" style="top:644px"></div>
<div class="t num" style="left:240px;width:51px;top:623px">14</div>
<div class="t" style="left:308px;top:623px">VTc.560.NE.060502</div>
<div class="t" style="left:471px;top:623px">Коллектор 1&quot;x 2 вент. x 3/4&quot;</div>
<div class="t num" style="left:760px;width:66px;top:623px">2,000</div>
<div class="t" style="left:843px;top:623px">x 1 уп. х <span style="letter-spacing:1.6px">...</span></div>
<div class="t" style="left:934px;top:623px">шт</div>
<div class="t" style="left:1022px;top:623px">&lt;произвольн...</div>
<div class="t num" style="left:1120px;width:80px;top:623px">2 232,00</div>
<div class="t num" style="left:1300px;width:97px;top:623px">4 464,00</div>
<div class="t" style="left:1414px;top:623px">К обеспечению</div>
<div class="cb" style="left:1533px;top:622px"></div>
<div class="rs" style="top:673px"></div>
<div class="t num" style="left:240px;width:51px;top:652px">15</div>
<div class="t" style="left:308px;top:652px">VTc.560.N.0502</div>
<div class="t" style="left:471px;top:652px">Коллектор 3/4&quot;x 2 вент. x 1/2&quot;</div>
<div class="t num" style="left:760px;width:66px;top:652px">1,000</div>
<div class="t" style="left:843px;top:652px">x 1 уп. х <span style="letter-spacing:1.6px">...</span></div>
<div class="t" style="left:934px;top:652px">шт</div>
<div class="t" style="left:1022px;top:652px">&lt;произвольн...</div>
<div class="t num" style="left:1120px;width:80px;top:652px">1 320,00</div>
<div class="t num" style="left:1300px;width:97px;top:652px">1 320,00</div>
<div class="t" style="left:1414px;top:652px">К обеспечению</div>
<div class="cb" style="left:1533px;top:651px"></div>
<div class="rs" style="top:702px"></div>
<div class="t num" style="left:240px;width:51px;top:681px">16</div>
<div class="t" style="left:308px;top:681px">VTc.100.S.U/2</div>
<svg class="a" style="left:448px;top:680px" width="14" height="16"><rect x="0.5" y="0.5" width="13" height="15" fill="#fbf3c4" stroke="#e9dc95" stroke-width="0.8"/><path d="M2.5,11 V3 H9 V5" fill="none" stroke="#b9b9b9" stroke-width="1.3"/><rect x="3.6" y="4" width="5.4" height="4.6" fill="#9b9b9b" opacity="0.5"/><rect x="5.2" y="6.2" width="7.4" height="7.6" fill="#f3c93a" stroke="#d6a922" stroke-width="0.8"/></svg>
<div class="t" style="left:471px;top:681px">Кронштейн д/гидроразделителя</div>
<div class="t num" style="left:760px;width:66px;top:681px">2,000</div>
<div class="t" style="left:934px;top:681px">шт</div>
<div class="t" style="left:1022px;top:681px">&lt;произвольн...</div>
<div class="t num" style="left:1120px;width:80px;top:681px">453,50</div>
<div class="t num" style="left:1300px;width:97px;top:681px">907,00</div>
<div class="t" style="left:1414px;top:681px">К обеспечению</div>
<div class="rs" style="top:731px"></div>
<div class="t num" style="left:240px;width:51px;top:710px">17</div>
<div class="t" style="left:308px;top:710px">VT.4430.NVE.15/10</div>
<svg class="a" style="left:448px;top:709px" width="14" height="16"><rect x="0.5" y="0.5" width="13" height="15" fill="#fbf3c4" stroke="#e9dc95" stroke-width="0.8"/><path d="M2.5,11 V3 H9 V5" fill="none" stroke="#b9b9b9" stroke-width="1.3"/><rect x="3.6" y="4" width="5.4" height="4.6" fill="#9b9b9b" opacity="0.5"/><rect x="5.2" y="6.2" width="7.4" height="7.6" fill="#f3c93a" stroke="#d6a922" stroke-width="0.8"/></svg>
<div class="t" style="left:471px;top:710px">Фитинг для нержевейки 15*1,0 x 3/4&quot; ЕК</div>
<div class="t num" style="left:760px;width:66px;top:710px">10,000</div>
<div class="t" style="left:843px;top:710px">x 10 уп.</div>
<div class="t" style="left:934px;top:710px">шт</div>
<div class="t" style="left:1022px;top:710px">&lt;произвольн...</div>
<div class="t num" style="left:1120px;width:80px;top:710px">188,90</div>
<div class="t num" style="left:1300px;width:97px;top:710px">1 889,00</div>
<div class="t" style="left:1414px;top:710px">К обеспечению</div>
<!-- scrollbars -->
<svg class="a" style="left:1558px;top:302px" width="9" height="8"><path d="M1,6 L4.5,1.5 L8,6 Z" fill="#333"/></svg>
<div class="a" style="left:1558px;top:318px;width:8px;height:409px;background:#d2d2d2;border-radius:4px"></div>
<div class="a" style="left:1558px;top:393px;width:8px;height:334px;background:#9d9d9d;border-radius:4px"></div>
<svg class="a" style="left:1558px;top:735px" width="9" height="8"><path d="M1,1.5 L4.5,6 L8,1.5 Z" fill="#b9b9b9"/></svg>
<svg class="a" style="left:243px;top:753px" width="8" height="9"><path d="M6,1 L1.5,4.5 L6,8 Z" fill="#b9b9b9"/></svg>
<div class="a" style="left:258px;top:753px;width:1274px;height:8px;background:#d2d2d2;border-radius:4px"></div>
<div class="a" style="left:258px;top:753px;width:834px;height:8px;background:#9d9d9d;border-radius:4px"></div>
<svg class="a" style="left:1540px;top:753px" width="8" height="9"><path d="M2,1 L6.5,4.5 L2,8 Z" fill="#333"/></svg>
<!-- below table -->
<div class="cb" style="left:235px;top:778px"></div>
<div class="t" style="left:256px;top:778px;color:#4d4d4d">Отгружать одной датой</div>
<div class="t" style="left:1425px;top:775px;color:#2e5596;text-decoration:underline">Состояние обеспечения</div>
<!-- tooltip -->
<div class="a" style="left:553px;top:291px;width:145px;height:23px;background:#fdf6d3;border:1px solid #dcd3a6"></div>
<div class="t" style="left:557px;top:295px;color:#111">Состав набора (Ctrl+K)</div>
<!-- footer -->
<div class="a" style="left:904px;top:813px;width:677px;height:35px;background:#efefef"></div>
<div class="t" style="left:909px;top:823px;color:#4d4d4d">Скидка:</div>
<div class="a" style="left:961px;top:818px;width:131px;height:25px;background:#ececec;border:1px solid #d9d9d9;border-radius:3px"></div>
<div class="t num" style="left:961px;width:127px;top:823px">0,00</div>
<div class="t" style="left:1101px;top:823px;color:#4d4d4d">НДС:</div>
<div class="a" style="left:1138px;top:818px;width:131px;height:25px;background:#ececec;border:1px solid #d9d9d9;border-radius:3px"></div>
<div class="t num" style="left:1138px;width:127px;top:823px">12 430,18</div>
<div class="t" style="left:1279px;top:823px;color:#4d4d4d">Заказано с НДС:</div>
<div class="a" style="left:1385px;top:818px;width:131px;height:25px;background:#ececec;border:1px solid #d9d9d9;border-radius:3px"></div>
<div class="t num" style="left:1385px;width:127px;top:823px">74 581,16</div>
<div class="t" style="left:1526px;top:823px;color:#4d4d4d">руб.</div>
<!-- annotations -->
<svg class="a" style="left:0;top:0;pointer-events:none" width="1600" height="862"><g fill="none" stroke="#2f9f47" stroke-width="2.8" stroke-linejoin="round" stroke-linecap="round">
<path d="M312.5,24.6 H501 Q509,24.6 509,32.5 V51 Q509,58.4 501,58.4 H312.5 Q305,58.4 305,51 V32 Q305,24.6 312.5,24.6 Z"/>
<path d="M314,62.2 H486" stroke-width="2.4"/>
<path d="M534,243.3 H563 Q569.6,243.3 569.6,250 V291.5 Q569.6,298.2 563,298.2 H534.5 Q527.8,298.2 527.8,291.5 V250 Q527.8,243.3 534,243.3 Z"/>
<path d="M329,671.5 L841,671.5 L880,673.5 L905,676.5 L913,679 L916,682 L916,721 L913,724.5 L895,728.5 L853,731.8 L318,732 L268,728 L257,724 L255,720 L255,683 L258,679 L280,674.5 Z"/>
</g></svg>
<div id="bot" class="a"></div><div id="bot2" class="a"></div>
</body></html>
